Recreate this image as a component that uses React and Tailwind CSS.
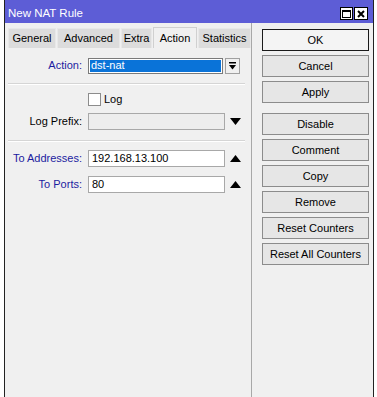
const tabs = [
  { label: "General", w: "w-[48px]" },
  { label: "Advanced", w: "w-[63px]" },
  { label: "Extra", w: "w-[31px]" },
  { label: "Action", w: "w-[44px]", active: true },
  { label: "Statistics", w: "w-[53px]" },
];

function Sep() {
  return (
    <div className="ml-[3px] mr-[6px] border-t border-[#d5d5d5] border-b border-b-white" />
  );
}

function Tri({ up }) {
  return (
    <svg width="11" height="7" viewBox="0 0 11 7" className="ml-[5px]">
      {up ? <polygon points="0,7 11,7 5.5,0" fill="#000" /> : <polygon points="0,0 11,0 5.5,7" fill="#000" />}
    </svg>
  );
}

function Btn({ children, ok, className = "" }) {
  return (
    <div
      className={`w-[107px] h-[22px] flex items-center justify-center border ${
        ok ? "border-[#1a1a1a] bg-[#f4f4f4]" : "border-[#8c8c8c] bg-[#e6e6e6]"
      } ${className}`}
    >
      {children}
    </div>
  );
}

export default function App() {
  return (
    <div className="w-[377px] h-[397px] bg-white overflow-hidden font-['Liberation_Sans',Arial,sans-serif] text-[11px] text-black">
      <div className="ml-[4px] w-[370px] h-full border-x border-[#222] bg-[#f0f0f0] flex flex-col">
        {/* title bar */}
        <div className="h-[23px] bg-[#5d5dd6] flex justify-between pl-[3px] pr-[5px] text-white">
          <span className="text-[11.5px] mt-[5px]">New NAT Rule</span>
          <div className="flex gap-[1px] mt-[7px]">
            <div className="w-[13px] h-[13px] bg-white border border-black flex items-center justify-center">
              <div className="w-[9px] h-[8px] border border-black border-t-2" />
            </div>
            <div className="w-[14px] h-[13px] bg-white border border-black flex items-center justify-center">
              <svg width="8" height="8" viewBox="0 0 8 8">
                <path d="M1 1L7 7M7 1L1 7" stroke="#000" strokeWidth="2" />
              </svg>
            </div>
          </div>
        </div>

        <div className="flex flex-1">
          {/* left */}
          <div className="w-[247px] border-r border-[#a8a8a8] flex flex-col">
            <div className="h-[25px] flex items-end pl-[3px] gap-[1px]">
              {tabs.map((t) => (
                <div
                  key={t.label}
                  className={`${t.w} flex items-center justify-center border border-b-0 ${
                    t.active
                      ? "h-[21px] bg-[#f0f0f0] border-[#d0d0d0]"
                      : "h-[20px] bg-[#dcdcdc] border-[#e8e8e8]"
                  }`}
                >
                  {t.label}
                </div>
              ))}
            </div>

            <div className="flex-1 flex flex-col">
              {/* Action */}
              <div className="mt-[9px] flex items-center h-[17px]">
                <div className="w-[77px] text-right text-[#1c1ca0]">Action:</div>
                <div className="ml-[6px] w-[135px] h-[16px] border border-[#7a7a7a] bg-white p-px">
                  <div className="h-full bg-[#0a73d8] text-white flex items-center pl-[1px] leading-none">dst-nat</div>
                </div>
                <div className="ml-[2px] w-[15px] h-[16px] border border-[#a0a0a0] bg-[#f0f0f0] flex items-center justify-center">
                  <svg width="7" height="8" viewBox="0 0 7 8">
                    <rect x="0" y="0" width="7" height="1.5" fill="#000" />
                    <polygon points="0,3 7,3 3.5,7.5" fill="#000" />
                  </svg>
                </div>
              </div>

              <div className="mt-[9px]">
                <Sep />
              </div>

              {/* Log */}
              <div className="mt-[7px] flex items-center h-[14px]">
                <div className="ml-[83px] w-[13px] h-[13px] border border-[#8c8c8c] bg-white" />
                <span className="ml-[3px]">Log</span>
              </div>

              {/* Log prefix */}
              <div className="mt-[7px] flex items-center h-[17px]">
                <div className="w-[77px] text-right">Log Prefix:</div>
                <div className="ml-[6px] w-[137px] h-[17px] border border-[#a8a8a8] bg-[#ededed]" />
                <Tri />
              </div>

              <div className="mt-[10px]">
                <Sep />
              </div>

              {/* To Addresses */}
              <div className="mt-[8px] flex items-center h-[17px]">
                <div className="w-[77px] text-right text-[#1c1ca0]">To Addresses:</div>
                <div className="ml-[6px] w-[137px] h-[17px] border border-[#a8a8a8] bg-white flex items-center pl-[3px]">
                  192.168.13.100
                </div>
                <Tri up />
              </div>

              {/* To Ports */}
              <div className="mt-[9px] flex items-center h-[17px]">
                <div className="w-[77px] text-right text-[#1c1ca0]">To Ports:</div>
                <div className="ml-[6px] w-[137px] h-[17px] border border-[#a8a8a8] bg-white flex items-center pl-[3px]">
                  80
                </div>
                <Tri up />
              </div>
            </div>
          </div>

          {/* right buttons */}
          <div className="flex-1 pl-[10px] pt-[6px] flex flex-col gap-[4px]">
            <Btn ok>OK</Btn>
            <Btn>Cancel</Btn>
            <Btn>Apply</Btn>
            <Btn className="mt-[6px]">Disable</Btn>
            <Btn>Comment</Btn>
            <Btn>Copy</Btn>
            <Btn>Remove</Btn>
            <Btn>Reset Counters</Btn>
            <Btn>Reset All Counters</Btn>
          </div>
        </div>
      </div>
    </div>
  );
}
